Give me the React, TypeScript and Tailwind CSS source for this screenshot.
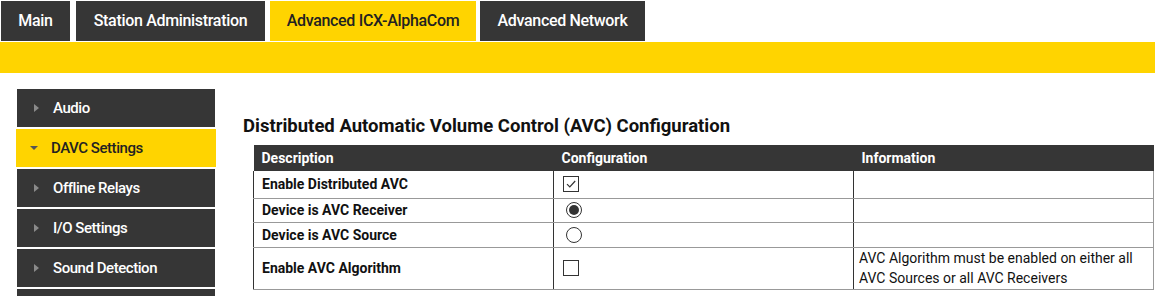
import { useState } from 'react'

const tabs = [
  { label: 'Main', w: 'w-[69px]', ml: 'ml-[1px]' },
  { label: 'Station Administration', w: 'w-[189px]', ml: 'ml-[6px]' },
  { label: 'Advanced ICX-AlphaCom', w: 'w-[206px]', ml: 'ml-[5px]', active: true },
  { label: 'Advanced Network', w: 'w-[165px]', ml: 'ml-[4px]' },
]

const menu = ['Audio', 'DAVC Settings', 'Offline Relays', 'I/O Settings', 'Sound Detection', '']

function Checkbox({ checked }: { checked: boolean }) {
  return (
    <span className="flex h-[16px] w-[16px] items-center justify-center border border-[#333] bg-white">
      {checked && (
        <svg width="12" height="12" viewBox="0 0 12 12">
          <path d="M2 6.2 L4.8 9 L10.2 3" fill="none" stroke="#333" strokeWidth="1.2" />
        </svg>
      )}
    </span>
  )
}

function Radio({ checked }: { checked: boolean }) {
  return (
    <span className="ml-[3px] flex h-[16px] w-[16px] items-center justify-center rounded-full border border-[#333] bg-white">
      {checked && <span className="h-[10px] w-[10px] rounded-full bg-[#333]" />}
    </span>
  )
}

export default function App() {
  const [active, setActive] = useState(1)

  const rows = [
    { label: 'Enable Distributed AVC', ctrl: <Checkbox checked />, h: 'h-[27px]' },
    { label: 'Device is AVC Receiver', ctrl: <Radio checked />, h: 'h-[24px]' },
    { label: 'Device is AVC Source', ctrl: <Radio checked={false} />, h: 'h-[25px]' },
    {
      label: 'Enable AVC Algorithm',
      ctrl: <Checkbox checked={false} />,
      h: 'h-[42px]',
      info: 'AVC Algorithm must be enabled on either all AVC Sources or all AVC Receivers',
    },
  ]

  return (
    <div className="h-[296px] w-[1155px] overflow-hidden bg-white font-['Roboto',sans-serif]">
      <div className="flex h-[41px] pt-[1px]">
        {tabs.map((t) => (
          <div
            key={t.label}
            className={`${t.w} ${t.ml} flex h-[40px] items-center justify-center text-[16px] font-medium tracking-[-0.02em] ${
              t.active ? 'bg-[#ffd400] text-[#222]' : 'bg-[#363636] text-white'
            }`}
          >
            {t.label}
          </div>
        ))}
      </div>
      <div className="mt-[1px] h-[31px] bg-[#ffd400]" />

      <div className="flex">
        <div className="w-[216px] pt-[16px]">
          {menu.map((m, i) => {
            const on = i === active
            return (
              <div
                key={i}
                onClick={() => setActive(i)}
                className={`mb-[2px] flex h-[38px] cursor-pointer items-center text-[15px] font-medium tracking-[-0.03em] ${
                  on
                    ? 'ml-[16px] w-[200px] bg-[#ffd400] pl-[14px] text-[#222]'
                    : 'ml-[17px] w-[198px] bg-[#363636] pl-[17px] text-white'
                }`}
              >
                {on ? (
                  <span className="mr-[13px] h-0 w-0 border-x-[4.5px] border-t-[4.5px] border-x-transparent border-t-[#555]" />
                ) : (
                  <span className="mr-[14px] h-0 w-0 border-y-[4px] border-l-[5px] border-y-transparent border-l-[#8a8a8a]" />
                )}
                {m}
              </div>
            )
          })}
        </div>

        <div className="ml-[27px] pt-[41px]">
          <h2 className="mb-[7px] text-[18.5px] leading-[24px] font-bold text-[#111]">
            Distributed Automatic Volume Control (AVC) Configuration
          </h2>
          <table className="ml-[10px] w-[900px] table-fixed border-collapse text-[14px] leading-[20px]">
            <thead>
              <tr className="h-[26px] bg-[#363636] text-left text-white">
                <th className="w-[300px] px-2 font-bold">Description</th>
                <th className="w-[300px] px-2 font-bold">Configuration</th>
                <th className="w-[300px] px-2 font-bold">Information</th>
              </tr>
            </thead>
            <tbody>
              {rows.map((r) => (
                <tr key={r.label} className={r.h}>
                  <td className="border-b border-l border-b-[#999] border-l-[#333] px-2 font-bold text-[#111]">
                    {r.label}
                  </td>
                  <td className="border-b border-l border-b-[#999] border-l-[#333] pl-[9px]">{r.ctrl}</td>
                  <td className="border-r border-b border-l border-r-[#999] border-b-[#999] border-l-[#333] px-[5px] align-top text-[#111]">
                    {r.info}
                  </td>
                </tr>
              ))}
            </tbody>
          </table>
        </div>
      </div>
    </div>
  )
}
